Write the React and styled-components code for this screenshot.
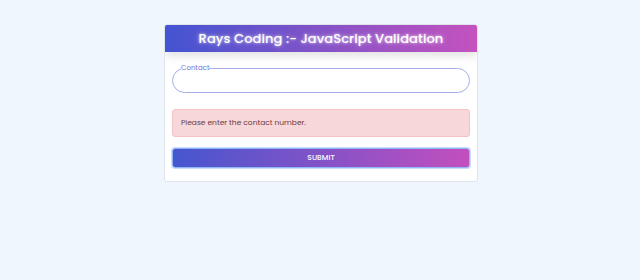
import React from "react";
import styled, { createGlobalStyle } from "styled-components";

const Global = createGlobalStyle`
  html, body { margin: 0; padding: 0; background: #eff6fe; }
  body { font-family: "Poppins", "Lato", "Open Sans", sans-serif; }
  * { box-sizing: border-box; }
`;

const Page = styled.div`
  width: 640px;
  height: 280px;
  display: flex;
  justify-content: center;
  padding-top: 24px;
  padding-left: 2px;
`;

const Card = styled.div`
  width: 314px;
  height: 158px;
  background: #fff;
  border: 1px solid #dfe3ea;
  border-radius: 3px;
  overflow: hidden;
  align-self: flex-start;
`;

const Header = styled.div`
  height: 27px;
  background: linear-gradient(90deg, #4354d2 0%, #8a52c6 55%, #c452bf 100%);
  display: flex;
  align-items: center;
  justify-content: center;
  box-shadow: 0 4px 10px rgba(0, 0, 0, 0.12);
  position: relative;
  z-index: 1;
`;

const Title = styled.h1`
  margin: 0;
  color: #fff;
  font-family: "Poppins", "Open Sans", sans-serif;
  font-weight: 500;
  font-size: 13px;
  letter-spacing: 0.1px;
  text-shadow: 0 0 3px rgba(255, 255, 255, 0.7), 0 0 6px rgba(255, 255, 255, 0.35);
`;

const Body = styled.div`
  padding: 12px 7px 0 7px;
  display: flex;
  flex-direction: column;
`;

const Field = styled.fieldset`
  margin: 0;
  height: 29px;
  border: 1px solid #a7acea;
  border-radius: 13px;
  padding: 0 0 0 8px;
`;

const Legend = styled.legend`
  font-family: "Poppins", sans-serif;
  font-size: 7px;
  color: #6d75cf;
  padding: 0;
  line-height: 8px;
`;

const Alert = styled.div`
  margin-top: 16px;
  height: 28px;
  background: #f8d7da;
  border: 1px solid #f5c2c7;
  border-radius: 3px;
  display: flex;
  align-items: center;
  padding-left: 8px;
  font-family: "Poppins", sans-serif;
  font-size: 7.5px;
  color: #6b3a40;
`;

const Button = styled.button`
  margin-top: 11px;
  height: 20px;
  width: 100%;
  border: 1.5px solid #8fb6f7;
  border-radius: 3px;
  background: linear-gradient(90deg, #4656cf 0%, #8a52c6 55%, #c34fbe 100%);
  color: #fff;
  font-family: "Poppins", sans-serif;
  font-weight: 500;
  font-size: 7.5px;
  text-transform: uppercase;
  box-shadow: 0 0 0 1px #c9dcfb;
  padding: 0;
`;

export default function App() {
  return (
    <>
      <Global />
      <Page>
        <Card>
          <Header>
            <Title>Rays Coding :- JavaScript Validation</Title>
          </Header>
          <Body>
            <Field>
              <Legend>Contact</Legend>
            </Field>
            <Alert>Please enter the contact number.</Alert>
            <Button>Submit</Button>
          </Body>
        </Card>
      </Page>
    </>
  );
}
